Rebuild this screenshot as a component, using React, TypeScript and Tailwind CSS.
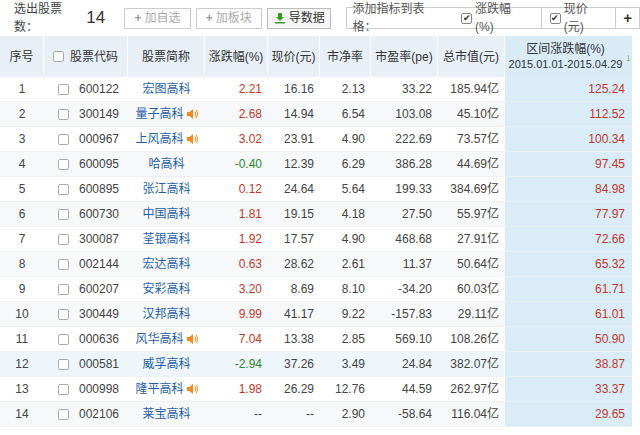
import React from "react";

const rows: [string, string, string, boolean, string, string, string, string, string, string][] = [
  ["1", "600122", "宏图高科", false, "2.21", "16.16", "2.13", "33.22", "185.94亿", "125.24"],
  ["2", "300149", "量子高科", true, "2.68", "14.94", "6.54", "103.08", "45.10亿", "112.52"],
  ["3", "000967", "上风高科", true, "3.02", "23.91", "4.90", "222.69", "73.57亿", "100.34"],
  ["4", "600095", "哈高科", false, "-0.40", "12.39", "6.29", "386.28", "44.69亿", "97.45"],
  ["5", "600895", "张江高科", false, "0.12", "24.64", "5.64", "199.33", "384.69亿", "84.98"],
  ["6", "600730", "中国高科", false, "1.81", "19.15", "4.18", "27.50", "55.97亿", "77.97"],
  ["7", "300087", "荃银高科", false, "1.92", "17.57", "4.90", "468.68", "27.91亿", "72.66"],
  ["8", "002144", "宏达高科", false, "0.63", "28.62", "2.61", "11.37", "50.64亿", "65.32"],
  ["9", "600207", "安彩高科", false, "3.20", "8.69", "8.10", "-34.20", "60.03亿", "61.71"],
  ["10", "300449", "汉邦高科", false, "9.99", "41.17", "9.22", "-157.83", "29.11亿", "61.01"],
  ["11", "000636", "风华高科", true, "7.04", "13.38", "2.85", "569.10", "108.26亿", "50.90"],
  ["12", "000581", "威孚高科", false, "-2.94", "37.26", "3.49", "24.84", "382.07亿", "38.87"],
  ["13", "000998", "隆平高科", true, "1.98", "26.29", "12.76", "44.59", "262.97亿", "33.37"],
  ["14", "002106", "莱宝高科", false, "--", "--", "2.90", "-58.64", "116.04亿", "29.65"],
];

const Box = () => <span className="inline-block w-[11px] h-[11px] border border-[#aaa] rounded-[2px] bg-white" />;
const Checked = () => (
  <span className="inline-flex items-center justify-center w-[11px] h-[11px] border border-[#888] rounded-[2px] bg-white text-[9px] leading-none text-[#333]">✔</span>
);
const Speaker = () => (
  <svg width="12" height="12" viewBox="0 0 12 12" className="ml-[2px]">
    <path d="M1 4h2.5L7 1v10L3.5 8H1z" fill="#f08a1c" />
    <path d="M9 3.5q1.5 2.5 0 5M10.5 2q2.5 4 0 8" stroke="#f08a1c" fill="none" strokeWidth="1" />
  </svg>
);

export default function App() {
  const th = "flex items-center justify-center border-r border-white";
  return (
    <div className="w-[640px] h-[435px] overflow-hidden bg-white text-[12px] text-[#444]" style={{ fontFamily: '"Liberation Sans", Arial, "Noto Sans CJK SC", sans-serif' }}>
      <div className="h-[36px] flex items-center pl-[14px] gap-[5px]">
        <span>选出股票数：</span>
        <span className="text-[17px] -ml-[4px] mr-[14px] text-[#333]">14</span>
        <span className="h-[21px] w-[67px] justify-center border border-[#ccc] flex items-center text-[#aaa]"><b className="mr-[3px] text-[#999]">+</b>加自选</span>
        <span className="h-[21px] w-[67px] justify-center border border-[#ccc] flex items-center text-[#aaa]"><b className="mr-[3px] text-[#999]">+</b>加板块</span>
        <span className="h-[21px] w-[65px] justify-center border border-[#bbb] bg-[#f6f6f6] flex items-center text-[#333]">
          <svg width="12" height="12" viewBox="0 0 12 12" className="mr-[3px]"><path d="M4 1h4v4h2L6 9 2 5h2z M1 10h10v1.5H1z" fill="#3a9a2a" /></svg>导数据
        </span>
        <div className="h-[22px] ml-[10px] border border-[#ccc] flex items-center">
          <span className="pl-[5px] pr-[14px] text-[#555]">添加指标到表格：</span>
          <span className="pr-[12px] flex items-center gap-[3px] text-[#555] border-r border-[#ccc] h-full"><Checked />涨跌幅(%)</span>
          <span className="px-[8px] flex items-center gap-[3px] text-[#555] border-r border-[#ccc] h-full"><Checked />现价(元)</span>
          <span className="px-[7px] font-bold text-[15px] text-[#333]">+</span>
        </div>
      </div>
      <div className="w-[632px]">
        <div className="h-[41px] flex bg-[#e8eff7] text-[#333]">
          <div className={`${th} w-[44px]`}>序号</div>
          <div className={`${th} w-[84px] gap-[6px]`}><Box />股票代码</div>
          <div className={`${th} w-[77px]`}>股票简称</div>
          <div className={`${th} w-[63px]`}>涨跌幅(%)</div>
          <div className={`${th} w-[52px]`}>现价(元)</div>
          <div className={`${th} w-[51px]`}>市净率</div>
          <div className={`${th} w-[67px]`}>市盈率(pe)</div>
          <div className={`${th} w-[67px]`}>总市值(元)</div>
          <div className="flex-1 flex flex-col items-center justify-center bg-[#d9ebf7] relative leading-[15px] pr-[6px]">
            <span>区间涨跌幅(%)</span>
            <span className="text-[11px]">2015.01.01-2015.04.29</span>
            <span className="absolute right-[1px] top-[14px] text-[#3a9a2a] text-[11px]">↓</span>
          </div>
        </div>
        {rows.map((r, i) => {
          const chg = r[4];
          const chgColor = chg.startsWith("-") && chg !== "--" ? "text-[#2b8a2b]" : chg === "--" ? "text-[#444]" : "text-[#c0392b]";
          return (
            <div key={r[0]} className={`h-[25px] flex items-center border-b border-[#eef0f2] ${i === 11 ? "bg-[#eef6fc]" : i % 2 ? "bg-[#f7f8fa]" : "bg-white"}`}>
              <div className="w-[44px] text-center">{r[0]}</div>
              <div className="w-[84px] flex items-center gap-[10px] pl-[14px]"><Box />{r[1]}</div>
              <div className="w-[77px] flex items-center justify-center text-[#1f5fa8]">{r[2]}{r[3] && <Speaker />}</div>
              <div className={`w-[63px] text-right pr-[6px] ${chgColor}`}>{chg}</div>
              <div className="w-[52px] text-right pr-[6px]">{r[5]}</div>
              <div className="w-[51px] text-right pr-[6px]">{r[6]}</div>
              <div className="w-[67px] text-right pr-[6px]">{r[7]}</div>
              <div className="w-[67px] text-right pr-[6px]">{r[8]}</div>
              <div className="flex-1 h-full flex items-center justify-end pr-[7px] bg-[#daecf8] text-[#c0392b]">{r[9]}</div>
            </div>
          );
        })}
      </div>
    </div>
  );
}
